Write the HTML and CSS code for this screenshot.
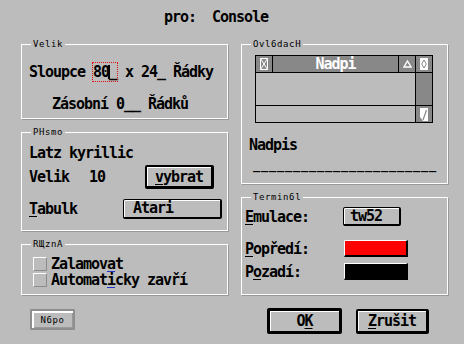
FILE: index.html
```html
<!DOCTYPE html>
<html>
<head>
  <title>pro: Console</title>
  <link rel="stylesheet" href="styles.css">
</head>
<body>
  <div class="title">pro:  Console</div>

  <div class="cols">
    <div class="col">
      <div class="frame velik">
        <span class="legend">Velik</span>
        <div class="line">Sloupce <span class="edit">80<span class="caret"></span>_</span> x 24_ Řádky</div>
        <div class="line indent">Zásobní 0__ Řádků</div>
      </div>

      <div class="frame pismo">
        <span class="legend">PHsmo</span>
        <div class="line">Latz kyrillic</div>
        <div class="row size-row">
          <span class="lbl-size">Velik</span>
          <span>10</span>
          <button class="btn btn-pick"><span class="u">v</span>ybrat</button>
        </div>
        <div class="row">
          <span class="lbl-table"><span class="u">T</span>abulk</span>
          <div class="popup">Atari</div>
        </div>
      </div>

      <div class="frame ruzna">
        <span class="legend">RЩznA</span>
        <div class="check"><span class="box"></span>Zalamov<span class="ub">a</span>t</div>
        <div class="check"><span class="box"></span>Automat<span class="ub">i</span>cky zavří</div>
      </div>

      <button class="btn-help">N6po</button>
    </div>

    <div class="col">
      <div class="frame ovladac">
        <span class="legend">Ovl6dacH</span>
        <div class="win">
          <div class="cell">
            <svg width="8" height="12" viewBox="0 0 8 12"><path d="M.5.5h7v11h-7zM.5.5l7 11M7.5.5l-7 11" fill="none" stroke="#fff"/></svg>
          </div>
          <div class="wtitle">Nadpi</div>
          <div class="cell">
            <svg width="9" height="8" viewBox="0 0 9 8"><path d="M4.5 1L8 7H1z" fill="none" stroke="#fff" stroke-width="1.4"/></svg>
          </div>
          <div class="cell">
            <svg width="8" height="12" viewBox="0 0 8 12"><rect width="8" height="12" fill="#fff"/><path d="M4 2l2.3 4L4 10 1.7 6z" fill="none" stroke="#888"/></svg>
          </div>
          <div class="work"></div>
          <div class="cell"></div>
          <div class="work"></div>
          <div class="cell">
            <svg width="8" height="13" viewBox="0 0 8 13"><path d="M0 0h8v13H3L0 9z" fill="#fff"/><path d="M6.5 2L3 12" stroke="#888" stroke-width="1.2"/></svg>
          </div>
        </div>
        <div class="line caption">Nadpis</div>
        <div class="line field">_______________________</div>
      </div>

      <div class="frame terminal">
        <span class="legend">Termin6l</span>
        <div class="row emu-row">
          <span class="lbl-term"><span class="u">E</span>mulace:</span>
          <div class="popup popup-emu">tw52</div>
        </div>
        <div class="row color-row">
          <span class="lbl-term"><span class="u">P</span>opředí:</span>
          <div class="swatch red"></div>
        </div>
        <div class="row color-row last">
          <span class="lbl-term">P<span class="u">o</span>zadí:</span>
          <div class="swatch black"></div>
        </div>
      </div>

      <div class="actions">
        <button class="btn btn-default">O<span class="u">K</span></button>
        <button class="btn btn-cancel"><span class="u">Z</span>rušit</button>
      </div>
    </div>
  </div>
</body>
</html>
```

FILE: styles.css
```css
body {
  margin: 0;
  background: #bcbcbc;
  font-family: "DejaVu Sans Mono", monospace;
  font-size: 15px;
  font-weight: bold;
  letter-spacing: -1.03px;
  line-height: 16px;
  color: #000;
}
button {
  font: inherit;
  letter-spacing: inherit;
  color: #000;
  background: #bcbcbc;
  padding: 0;
  box-sizing: border-box;
}
.title {
  height: 44px;
  box-sizing: border-box;
  padding: 9px 0 0 164px;
  white-space: pre;
}
.cols {
  display: grid;
  grid-template-columns: 207px 207px;
  column-gap: 13px;
  padding-left: 21px;
}
.col {
  display: flex;
  flex-direction: column;
  gap: 13px;
}

/* frames */
.frame {
  position: relative;
  box-sizing: border-box;
  border: 1px solid #fff;
  box-shadow: 1px 1px 0 #999;
}
.legend {
  position: absolute;
  top: -5px;
  left: 9px;
  padding: 0 2px;
  background: #bcbcbc;
  font-size: 9px;
  line-height: 9px;
  font-weight: normal;
  letter-spacing: 0.6px;
}
.line {
  white-space: pre;
  height: 16px;
}
.row {
  display: flex;
  align-items: center;
}
.u {
  text-decoration: underline;
  text-underline-offset: 2px;
  text-decoration-thickness: 1px;
}
.ub {
  text-decoration: underline;
  text-decoration-color: #2232c8;
  text-underline-offset: 2px;
  text-decoration-thickness: 1px;
}

/* Velik */
.velik {
  height: 75px;
  padding: 19px 0 0 7px;
}
.velik .indent {
  margin: 16px 0 0 23px;
}
.edit {
  outline: 1px dotted #e01010;
}
.caret {
  display: inline-block;
  width: 2px;
  height: 14px;
  margin: 0 -1px 0 -1px;
  background: #000;
  vertical-align: -2px;
}

/* Pismo */
.pismo {
  height: 99px;
  padding: 12px 0 0 7px;
}
.size-row {
  margin-top: 4px;
  height: 24px;
}
.lbl-size {
  width: 60px;
}
.btn {
  border: 2px solid #000;
  border-right-width: 3px;
  border-bottom-width: 3px;
  border-radius: 2px;
  box-shadow: inset 1px 1px 0 #fff;
  text-align: center;
}
.btn-pick {
  width: 69px;
  height: 24px;
  margin: 0 13px 0 auto;
}
.pismo .row + .row {
  margin-top: 10px;
}
.lbl-table {
  width: 94px;
}
.popup {
  box-sizing: border-box;
  width: 99px;
  height: 20px;
  padding-left: 9px;
  border: 1px solid #000;
  border-right-width: 2px;
  border-bottom-width: 2px;
  border-radius: 2px;
  box-shadow: inset 1px 1px 0 #fff;
  line-height: 17px;
}

/* Ruzna */
.ruzna {
  height: 51px;
  padding: 11px 0 0 11px;
}
.check {
  display: flex;
  align-items: center;
  height: 16px;
  white-space: pre;
}
.box {
  box-sizing: border-box;
  width: 14px;
  height: 14px;
  margin-right: 4px;
  border: 1px solid #fff;
  border-right-color: #8c8c8c;
  border-bottom-color: #8c8c8c;
}
.btn-help {
  width: 45px;
  height: 21px;
  margin: 1px 0 0 9px;
  border: 2px solid #8e8e8e;
  border-radius: 1px;
  box-shadow: inset 2px 2px 0 #fff, inset -1px -1px 0 #9a9a9a;
  font-size: 9px;
  font-weight: normal;
  letter-spacing: 0.6px;
}

/* Ovladaci */
.ovladac {
  height: 140px;
  padding-top: 10px;
}
.win {
  display: grid;
  grid-template-columns: 16px 125px 16px 16px;
  grid-template-rows: 16px 32px 16px;
  gap: 1px;
  width: 178px;
  margin-left: 13px;
  border: 1px solid #000;
  background: #000;
  box-sizing: border-box;
}
.cell {
  display: flex;
  align-items: center;
  justify-content: center;
  background: #888;
}
.wtitle {
  background: #888;
  color: #fff;
  text-align: center;
}
.work {
  grid-column: 1 / 4;
  background: #bcbcbc;
}
.caption {
  margin: 14px 0 0 7px;
}
.field {
  margin: 4px 0 0 11px;
  font-size: 12px;
  letter-spacing: 0.78px;
}

/* Terminal */
.terminal {
  height: 98px;
  padding: 9px 0 0 3px;
}
.lbl-term {
  width: 98px;
}
.emu-row {
  height: 19px;
}
.popup-emu {
  width: 58px;
  height: 19px;
  padding-left: 6px;
  line-height: 16px;
}
.color-row {
  height: 17px;
  margin-top: 14px;
}
.color-row.last {
  margin-top: 6px;
}
.swatch {
  box-sizing: border-box;
  width: 64px;
  height: 17px;
  margin-left: 1px;
  border: 1px solid #fff;
  border-right: 2px solid #000;
  border-bottom: 2px solid #000;
}
.red {
  background: #ff0000;
}
.black {
  background: #000;
}

/* bottom buttons */
.actions {
  display: flex;
  align-items: flex-start;
}
.btn-default {
  width: 75px;
  height: 26px;
  margin-left: 26px;
  border-width: 3px;
}
.btn-cancel {
  width: 73px;
  height: 25px;
  margin: 1px 0 0 14px;
}
```
